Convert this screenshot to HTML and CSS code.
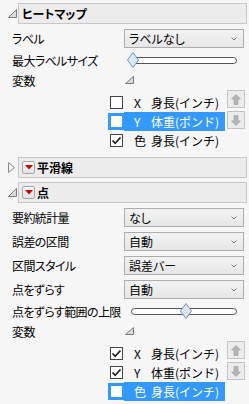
FILE: index.html
```html
<!DOCTYPE html>
<html lang="ja">
<head>
  <meta charset="UTF-8" />
  <title>ヒートマップ</title>
  <link rel="stylesheet" href="styles.css">
</head>
<body>
  <div class="panel">
    <!-- ヒートマップ -->
    <div class="ohead">
      <span class="disc"><svg width="9" height="9"><polygon class="tri" points="8.5,0.5 8.5,8.5 0.5,8.5"/></svg></span>
      <div class="obox"><span class="otitle">ヒートマップ</span></div>
    </div>
    <div class="obody">
      <div class="row sel-row">
        <span class="lbl">ラベル</span>
        <div class="sel"><span>ラベルなし</span><svg class="chev" width="6" height="4"><polyline points="0.5,0.5 3,3 5.5,0.5"/></svg></div>
      </div>
      <div class="row slide-row">
        <span class="lbl">最大ラベルサイズ</span>
        <div class="track"><svg class="thumb" style="left:-5px" width="12" height="16"><polygon points="6,0.5 11.5,8 6,15.5 0.5,8"/></svg></div>
      </div>
      <div class="row var-row">
        <span class="lbl">変数</span>
        <svg class="mini" width="9" height="8"><polygon class="tri" points="8.5,0.5 8.5,7.5 0.5,7.5"/></svg>
      </div>
      <div class="vars">
        <div class="items">
          <div class="item"><span class="cb"></span><div class="name"><span class="k">X</span>身長(インチ)</div></div>
          <div class="item"><span class="cb focus"></span><div class="name on"><span class="k">Y</span>体重(ポンド)</div></div>
          <div class="item"><span class="cb"><svg width="11" height="11"><polyline points="1.5,5.5 4.2,8.3 9.5,2.5"/></svg></span><div class="name"><span class="k">色</span>身長(インチ)</div></div>
        </div>
        <div class="btns">
          <div class="mv"><svg width="10" height="11"><polygon points="5,0.5 9.5,5 7,5 7,10.5 3,10.5 3,5 0.5,5"/></svg></div>
          <div class="mv"><svg width="10" height="11"><polygon points="5,10.5 9.5,6 7,6 7,0.5 3,0.5 3,6 0.5,6"/></svg></div>
        </div>
      </div>
    </div>

    <!-- 平滑線 -->
    <div class="ohead gap-big">
      <span class="disc"><svg width="8" height="11"><polygon class="tri closed" points="0.5,0.5 6.5,5.5 0.5,10.5"/></svg></span>
      <div class="obox"><span class="redbtn"><svg width="8" height="5"><polygon points="0,0 8,0 4,4.5"/></svg></span><span class="otitle">平滑線</span></div>
    </div>

    <!-- 点 -->
    <div class="ohead gap-small">
      <span class="disc"><svg width="9" height="9"><polygon class="tri" points="8.5,0.5 8.5,8.5 0.5,8.5"/></svg></span>
      <div class="obox"><span class="redbtn"><svg width="8" height="5"><polygon points="0,0 8,0 4,4.5"/></svg></span><span class="otitle">点</span></div>
    </div>
    <div class="obody">
      <div class="row sel-row">
        <span class="lbl">要約統計量</span>
        <div class="sel"><span>なし</span><svg class="chev" width="6" height="4"><polyline points="0.5,0.5 3,3 5.5,0.5"/></svg></div>
      </div>
      <div class="row sel-row">
        <span class="lbl">誤差の区間</span>
        <div class="sel"><span>自動</span><svg class="chev" width="6" height="4"><polyline points="0.5,0.5 3,3 5.5,0.5"/></svg></div>
      </div>
      <div class="row sel-row">
        <span class="lbl">区間スタイル</span>
        <div class="sel"><span>誤差バー</span><svg class="chev" width="6" height="4"><polyline points="0.5,0.5 3,3 5.5,0.5"/></svg></div>
      </div>
      <div class="row sel-row">
        <span class="lbl">点をずらす</span>
        <div class="sel"><span>自動</span><svg class="chev" width="6" height="4"><polyline points="0.5,0.5 3,3 5.5,0.5"/></svg></div>
      </div>
      <div class="row slide-row">
        <span class="lbl">点をずらす範囲の上限</span>
        <div class="track"><svg class="thumb" style="left:48px" width="12" height="16"><polygon points="6,0.5 11.5,8 6,15.5 0.5,8"/></svg></div>
      </div>
      <div class="row var-row">
        <span class="lbl">変数</span>
        <svg class="mini" width="9" height="8"><polygon class="tri" points="8.5,0.5 8.5,7.5 0.5,7.5"/></svg>
      </div>
      <div class="vars">
        <div class="items">
          <div class="item"><span class="cb"><svg width="11" height="11"><polyline points="1.5,5.5 4.2,8.3 9.5,2.5"/></svg></span><div class="name"><span class="k">X</span>身長(インチ)</div></div>
          <div class="item"><span class="cb"><svg width="11" height="11"><polyline points="1.5,5.5 4.2,8.3 9.5,2.5"/></svg></span><div class="name"><span class="k">Y</span>体重(ポンド)</div></div>
          <div class="item"><span class="cb focus"></span><div class="name on"><span class="k">色</span>身長(インチ)</div></div>
        </div>
        <div class="btns">
          <div class="mv"><svg width="10" height="11"><polygon points="5,0.5 9.5,5 7,5 7,10.5 3,10.5 3,5 0.5,5"/></svg></div>
          <div class="mv"><svg width="10" height="11"><polygon points="5,10.5 9.5,6 7,6 7,0.5 3,0.5 3,6 0.5,6"/></svg></div>
        </div>
      </div>
    </div>
  </div>
</body>
</html>
```

FILE: styles.css
```css
body {
  margin: 0;
  background: #f6f6f6;
  color: #000;
  font-family: 'Noto Sans CJK JP', sans-serif;
  font-size: 12px;
  font-feature-settings: "palt";
  width: 249px;
  height: 404px;
  overflow: hidden;
}
.panel {
  padding: 3px 2px 0 8px;
}

/* outline headers */
.ohead {
  display: flex;
  align-items: center;
  height: 21px;
}
.ohead.gap-big { margin-top: 7px; }
.ohead.gap-small { margin-top: 4px; }
.disc {
  width: 10px;
  flex: none;
  display: flex;
  align-items: center;
}
.disc svg { display: block; }
.tri {
  fill: #dcdcdc;
  stroke: #7a7a7a;
  stroke-width: 1;
}
.tri.closed {
  fill: #f4f4f4;
  stroke: #8a8a8a;
}
.obox {
  flex: 1;
  height: 21px;
  box-sizing: border-box;
  border: 1px solid #c8c8c8;
  background: #ececec;
  display: flex;
  align-items: center;
  padding-left: 3px;
}
.otitle {
  font-weight: 700;
  font-size: 12px;
}
.redbtn {
  width: 13px;
  height: 13px;
  box-sizing: border-box;
  border: 1px solid #a6a6a6;
  border-radius: 2px;
  background: linear-gradient(#fdfdfd, #e2e2e2);
  display: flex;
  align-items: center;
  justify-content: center;
  margin-right: 2px;
}
.redbtn svg { display: block; fill: #d00000; }

/* body rows */
.obody {
  padding-left: 4px;
}
.row {
  display: flex;
  align-items: center;
}
.lbl {
  width: 112px;
  flex: none;
  white-space: nowrap;
  letter-spacing: -0.6px;
}
.sel-row {
  height: 19px;
  margin-top: 5px;
}
.slide-row { height: 24px; }
.var-row { height: 16px; }

.sel {
  width: 120px;
  height: 19px;
  box-sizing: border-box;
  border: 1px solid #acacac;
  background: linear-gradient(#f3f3f3, #e6e6e6);
  display: flex;
  align-items: center;
  justify-content: space-between;
  padding: 0 6px 0 4px;
}
.chev {
  fill: none;
  stroke: #7a7a7a;
  stroke-width: 1;
}

.track {
  position: relative;
  margin-left: 7px;
  width: 106px;
  height: 7px;
  box-sizing: border-box;
  border: 1px solid #555;
  border-radius: 4px;
  background: #fff;
}
.thumb {
  position: absolute;
  top: -5.5px;
  fill: #dce8f7;
  stroke: #6d8fc0;
  stroke-width: 1;
}
.mini {
  margin-left: 1px;
  display: block;
}

/* variable lists */
.vars {
  display: flex;
  margin-left: 98px;
}
.items {
  padding-top: 5px;
}
.item {
  display: flex;
  align-items: center;
  height: 19px;
}
.cb {
  width: 13px;
  height: 13px;
  box-sizing: border-box;
  border: 1px solid #444;
  background: #fff;
  margin-right: 1px;
  display: flex;
  align-items: center;
  justify-content: center;
}
.cb svg {
  fill: none;
  stroke: #222;
  stroke-width: 1.8;
}
.cb.focus {
  border-color: #3399ff;
  outline: 2px solid #3399ff;
}
.name {
  width: 101px;
  height: 19px;
  box-sizing: border-box;
  padding-left: 10px;
  display: flex;
  align-items: center;
  white-space: nowrap;
  font-feature-settings: normal;
}
.name.on {
  background: #3399ff;
  color: #fff;
}
.k {
  width: 17px;
  flex: none;
}
.btns {
  margin-left: 2px;
  padding-top: 2px;
  display: flex;
  flex-direction: column;
  gap: 3px;
}
.mv {
  width: 18px;
  height: 18px;
  box-sizing: border-box;
  border: 1px solid #c4c4c4;
  background: #ebebeb;
  display: flex;
  align-items: center;
  justify-content: center;
}
.mv svg {
  fill: #b4b4b4;
  stroke: #a0a0a0;
  stroke-width: 0.6;
}
```
